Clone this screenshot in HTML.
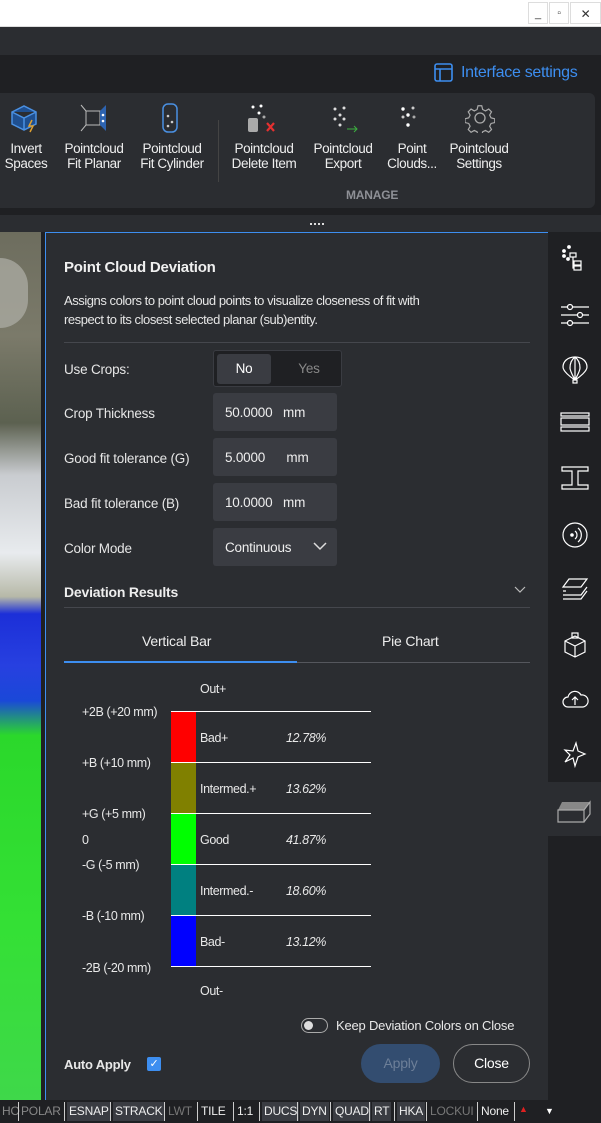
<!DOCTYPE html>
<html><head><meta charset="utf-8"><style>
*{margin:0;padding:0;box-sizing:border-box}
body{width:601px;height:1123px;overflow:hidden;background:#2b2d31;font-family:"Liberation Sans",sans-serif;color:#e8e8e8;position:relative;font-size:13.5px;letter-spacing:-0.2px}
.a{position:absolute}
.lbl{position:absolute;left:64px;font-size:13.5px;color:#e6e6e6}
.inp{position:absolute;left:213px;width:124px;height:38px;background:#3a3c42;border-radius:3px;font-size:13.5px;padding:12px 0 0 12px;color:#eee}
.tb{position:absolute;text-align:center;font-size:13.5px;line-height:15px;color:#eee;top:141px;letter-spacing:-0.4px}
.sb{position:absolute;top:1102px;height:19px;font-size:12px;line-height:19px;padding:0 2px;color:#eee}
.sep{position:absolute;top:1102px;width:1px;height:19px;background:#ccc}
.c{position:absolute;font-size:12.5px;letter-spacing:-0.4px}
</style></head><body>
<div class="a" style="left:0;top:0;width:601px;height:27px;background:#fff;border-bottom:1px solid #ddd"></div>
<div class="a" style="left:528px;top:2px;width:20px;height:22px;border:1px solid #ddd;font-size:11px;text-align:center;line-height:22px;color:#333">_</div>
<div class="a" style="left:549px;top:2px;width:20px;height:22px;border:1px solid #ddd;font-size:10px;text-align:center;line-height:22px;color:#333">▫</div>
<div class="a" style="left:570px;top:2px;width:31px;height:22px;border:1px solid #ddd;font-size:12px;text-align:center;line-height:22px;color:#333">✕</div>
<div class="a" style="left:0;top:27px;width:601px;height:28px;background:#2b2d31"></div>
<div class="a" style="left:0;top:55px;width:601px;height:160px;background:#1f2023"></div>
<svg class="a" style="left:433px;top:62px" width="22" height="22"><rect x="2" y="2" width="17" height="17" rx="2" fill="none" stroke="#3d8ef0" stroke-width="1.6"/><line x1="2" y1="7" x2="19" y2="7" stroke="#3d8ef0" stroke-width="1.6"/><line x1="7" y1="7" x2="7" y2="19" stroke="#3d8ef0" stroke-width="1.6"/></svg>
<div class="a" style="left:461px;top:64px;font-size:16px;color:#3d8ef0;letter-spacing:-0.3px">Interface settings</div>
<div class="a" style="left:0;top:93px;width:595px;height:115px;background:#2b2d31;border-radius:0 6px 6px 0"></div>
<svg class="a" style="left:8px;top:102px" width="32" height="32"><path d="M4 10 L16 4 L28 10 L28 22 L16 28 L4 22Z M4 10 L16 16 L28 10 M16 16 L16 28" fill="#1f4f8f" stroke="#4a90e2" stroke-width="1.5"/><path d="M24 18 l-3 6 h4 l-3 6" stroke="#e0a030" fill="none" stroke-width="1.5"/></svg>
<svg class="a" style="left:78px;top:102px" width="32" height="32"><rect x="8" y="9" width="14" height="14" fill="none" stroke="#bbb"/><path d="M3 3 L8 9 M3 29 L8 23" stroke="#bbb"/><path d="M22 9 L28 3 L28 29 L22 23Z" fill="#2d63b0"/><circle cx="25" cy="13" r="1.3" fill="#fff"/><circle cx="25" cy="19" r="1.3" fill="#fff"/></svg>
<svg class="a" style="left:158px;top:102px" width="24" height="32"><rect x="5" y="2" width="14" height="28" rx="5" fill="none" stroke="#4a90e2" stroke-width="1.5"/><circle cx="10" cy="14" r="1.3" fill="#ccc"/><circle cx="14" cy="20" r="1.3" fill="#ccc"/><circle cx="10" cy="24" r="1.3" fill="#ccc"/></svg>
<div class="a" style="left:218px;top:120px;width:1px;height:62px;background:#444"></div>
<svg class="a" style="left:245px;top:103px" width="36" height="32"><circle cx="8" cy="4" r="1.5" fill="#fff"/><circle cx="16" cy="3" r="1.5" fill="#fff"/><circle cx="14" cy="10" r="1.5" fill="#fff"/><circle cx="19" cy="14" r="1.5" fill="#aaa"/><rect x="3" y="15" width="10" height="14" rx="2" fill="#aaa"/><path d="M22 20 l7 8 M29 20 l-7 8" stroke="#e53030" stroke-width="2.2"/></svg>
<svg class="a" style="left:326px;top:103px" width="36" height="32"><circle cx="9" cy="6" r="1.5" fill="#ddd"/><circle cx="18" cy="5" r="1.5" fill="#ddd"/><circle cx="14" cy="12" r="1.5" fill="#ddd"/><circle cx="9" cy="16" r="1.5" fill="#ddd"/><circle cx="18" cy="16" r="1.5" fill="#ddd"/><circle cx="14" cy="22" r="1.5" fill="#ddd"/><path d="M21 26 h10 m-3 -3 l3 3 l-3 3" stroke="#3cb040" fill="none"/></svg>
<svg class="a" style="left:396px;top:103px" width="30" height="32"><circle cx="7" cy="6" r="1.7" fill="#fff"/><circle cx="17" cy="5" r="1.5" fill="#ccc"/><circle cx="12" cy="12" r="1.7" fill="#fff"/><circle cx="7" cy="14" r="1.5" fill="#ccc"/><circle cx="18" cy="14" r="1.5" fill="#aaa"/><circle cx="12" cy="22" r="1.7" fill="#fff"/></svg>
<svg class="a" style="left:465px;top:103px" width="30" height="30"><circle cx="15" cy="15" r="5" fill="none" stroke="#aaa" stroke-width="1.3"/><path d="M13 2h4l1 4 3 1.5 3.5-2 3 3-2 3.5 1.5 3 4 1v4l-4 1-1.5 3 2 3.5-3 3-3.5-2-3 1.5-1 4h-4l-1-4-3-1.5-3.5 2-3-3 2-3.5-1.5-3-4-1v-4l4-1 1.5-3-2-3.5 3-3 3.5 2 3-1.5z" fill="none" stroke="#aaa" stroke-width="1.3" transform="scale(0.93) translate(1 1)"/></svg>
<div class="tb" style="left:0;width:52px">Invert<br>Spaces</div>
<div class="tb" style="left:56px;width:76px">Pointcloud<br>Fit Planar</div>
<div class="tb" style="left:133px;width:78px">Pointcloud<br>Fit Cylinder</div>
<div class="tb" style="left:225px;width:78px">Pointcloud<br>Delete Item</div>
<div class="tb" style="left:304px;width:78px">Pointcloud<br>Export</div>
<div class="tb" style="left:380px;width:64px">Point<br>Clouds...</div>
<div class="tb" style="left:440px;width:78px">Pointcloud<br>Settings</div>
<div class="a" style="left:346px;top:188px;font-size:12px;font-weight:bold;color:#8e9096">MANAGE</div>
<div class="a" style="left:0;top:215px;width:601px;height:17px;background:#2b2d31"></div>
<div class="a" style="left:310px;top:223px;width:14px;height:2px;border-top:2px dotted #ddd"></div>
<div class="a" style="left:0;top:232px;width:41px;height:868px;background:linear-gradient(180deg,#6d6d5e 0%,#7b7a6a 12%,#5c6150 22%,#c9ccd0 28%,#e8ebee 37%,#b7b9a8 42%,#1c2fd8 44%,#2740e0 50%,#1a48d8 54%,#2bd82b 58%,#34e035 80%,#3fd84a 100%)"></div>
<div class="a" style="left:0;top:258px;width:28px;height:70px;background:#a9a9a0;border-radius:0 35px 35px 0;opacity:.8"></div>
<div class="a" style="left:41px;top:232px;width:4px;height:868px;background:#1f2023"></div>
<div class="a" style="left:45px;top:232px;width:503px;height:868px;background:#2b2d31;border-top:1px solid #3d8ef0;border-left:1px solid #3d8ef0"></div>
<div class="a" style="left:64px;top:259px;font-size:15px;font-weight:bold;color:#f0f0f0">Point Cloud Deviation</div>
<div class="a" style="left:64px;top:291px;width:480px;font-size:13px;line-height:19px;color:#e6e6e6;letter-spacing:-0.45px">Assigns colors to point cloud points to visualize closeness of fit with<br>respect to its closest selected planar (sub)entity.</div>
<div class="a" style="left:64px;top:342px;width:466px;height:1px;background:#45474d"></div>
<div class="lbl" style="top:362px">Use Crops:</div>
<div class="a" style="left:213px;top:350px;width:129px;height:37px;background:#1f2023;border:1px solid #3a3c42;border-radius:3px"></div>
<div class="a" style="left:217px;top:354px;width:54px;height:30px;background:#3a3c42;border-radius:3px;text-align:center;line-height:30px;color:#fff">No</div>
<div class="a" style="left:284px;top:354px;width:50px;height:30px;text-align:center;line-height:30px;color:#888">Yes</div>
<div class="lbl" style="top:406px">Crop Thickness</div>
<div class="inp" style="top:393px">50.0000&nbsp;&nbsp;&nbsp;mm</div>
<div class="lbl" style="top:451px">Good fit tolerance (G)</div>
<div class="inp" style="top:438px">5.0000&nbsp;&nbsp;&nbsp;&nbsp;&nbsp;&nbsp;mm</div>
<div class="lbl" style="top:496px">Bad fit tolerance (B)</div>
<div class="inp" style="top:483px">10.0000&nbsp;&nbsp;&nbsp;mm</div>
<div class="lbl" style="top:541px">Color Mode</div>
<div class="inp" style="top:528px">Continuous</div>
<svg class="a" style="left:313px;top:541px" width="14" height="10"><path d="M1 2 l6 6 6-6" stroke="#ddd" fill="none" stroke-width="1.5"/></svg>
<div class="a" style="left:64px;top:584px;font-size:14px;font-weight:bold;color:#eee">Deviation Results</div>
<svg class="a" style="left:514px;top:586px" width="12" height="8"><path d="M1 1 l5 5 5-5" stroke="#bbb" fill="none" stroke-width="1.2"/></svg>
<div class="a" style="left:64px;top:607px;width:466px;height:1px;background:#45474d"></div>
<div class="a" style="left:142px;top:633px;font-size:14px;color:#eee">Vertical Bar</div>
<div class="a" style="left:382px;top:633px;font-size:14px;color:#eee">Pie Chart</div>
<div class="a" style="left:64px;top:662px;width:466px;height:1px;background:#55575d"></div>
<div class="a" style="left:64px;top:661px;width:233px;height:2px;background:#3d8ef0"></div>
<div class="c" style="left:200px;top:682px">Out+</div>
<div class="c" style="left:200px;top:984px">Out-</div>
<div class="a" style="left:171px;top:712px;width:25px;height:51px;background:#ff0000"></div>
<div class="a" style="left:171px;top:763px;width:25px;height:51px;background:#808000"></div>
<div class="a" style="left:171px;top:814px;width:25px;height:51px;background:#00ff00"></div>
<div class="a" style="left:171px;top:865px;width:25px;height:51px;background:#008080"></div>
<div class="a" style="left:171px;top:916px;width:25px;height:51px;background:#0000ff"></div>
<div class="a" style="left:171px;top:711px;width:200px;height:1px;background:#fff"></div>
<div class="a" style="left:171px;top:762px;width:200px;height:1px;background:#fff"></div>
<div class="a" style="left:171px;top:813px;width:200px;height:1px;background:#fff"></div>
<div class="a" style="left:171px;top:864px;width:200px;height:1px;background:#fff"></div>
<div class="a" style="left:171px;top:915px;width:200px;height:1px;background:#fff"></div>
<div class="a" style="left:171px;top:966px;width:200px;height:1px;background:#fff"></div>
<div class="c" style="left:82px;top:705px">+2B (+20 mm)</div>
<div class="c" style="left:82px;top:756px">+B (+10 mm)</div>
<div class="c" style="left:82px;top:807px">+G (+5 mm)</div>
<div class="c" style="left:82px;top:833px">0</div>
<div class="c" style="left:82px;top:858px">-G (-5 mm)</div>
<div class="c" style="left:82px;top:909px">-B (-10 mm)</div>
<div class="c" style="left:82px;top:961px">-2B (-20 mm)</div>
<div class="c" style="left:200px;top:731px">Bad+</div>
<div class="c" style="left:200px;top:782px">Intermed.+</div>
<div class="c" style="left:200px;top:833px">Good</div>
<div class="c" style="left:200px;top:884px">Intermed.-</div>
<div class="c" style="left:200px;top:935px">Bad-</div>
<div class="c" style="left:286px;top:731px;font-style:italic">12.78%</div>
<div class="c" style="left:286px;top:782px;font-style:italic">13.62%</div>
<div class="c" style="left:286px;top:833px;font-style:italic">41.87%</div>
<div class="c" style="left:286px;top:884px;font-style:italic">18.60%</div>
<div class="c" style="left:286px;top:935px;font-style:italic">13.12%</div>
<div class="a" style="left:301px;top:1018px;width:27px;height:15px;border:1px solid #aaa;border-radius:8px"></div>
<div class="a" style="left:304px;top:1021px;width:9px;height:9px;background:#ddd;border-radius:50%"></div>
<div class="a" style="left:336px;top:1018px;font-size:13px">Keep Deviation Colors on Close</div>
<div class="a" style="left:64px;top:1057px;font-size:13px;font-weight:bold">Auto Apply</div>
<div class="a" style="left:147px;top:1057px;width:14px;height:14px;background:#3d8ef0;border-radius:2px;color:#fff;font-size:11px;text-align:center;line-height:14px">✓</div>
<div class="a" style="left:361px;top:1044px;width:79px;height:39px;background:#334d70;border-radius:20px;text-align:center;line-height:39px;color:#6d7f98;font-size:14px">Apply</div>
<div class="a" style="left:453px;top:1044px;width:77px;height:39px;border:1px solid #888;border-radius:20px;text-align:center;line-height:37px;color:#fff;font-size:14px">Close</div>
<div class="a" style="left:548px;top:232px;width:53px;height:868px;background:#1f2023"></div>
<div class="a" style="left:548px;top:782px;width:53px;height:54px;background:#2b2d31"></div>
<svg class="a" style="left:560px;top:245px" width="30" height="30" fill="none" stroke="#fff" stroke-width="1.2"><circle cx="4" cy="6" r="1.3" fill="#fff"/><circle cx="9" cy="2" r="1.3" fill="#fff"/><circle cx="4" cy="11" r="1.3" fill="#fff"/><circle cx="8" cy="14" r="1.3" fill="#fff"/><rect x="10" y="8" width="6" height="4"/><rect x="14" y="16" width="7" height="4"/><rect x="14" y="21" width="7" height="4"/><path d="M13 12v11h1M13 18h1"/></svg>
<svg class="a" style="left:560px;top:302px" width="30" height="30" stroke="#fff" fill="none" stroke-width="1.2"><path d="M1 5h28M1 13h28M1 21h28"/><circle cx="10" cy="5" r="2.5" fill="#1f2023"/><circle cx="20" cy="13" r="2.5" fill="#1f2023"/><circle cx="10" cy="21" r="2.5" fill="#1f2023"/></svg>
<svg class="a" style="left:560px;top:355px" width="30" height="30" stroke="#fff" fill="none" stroke-width="1.2"><path d="M15 2c-8 0-12 5-12 10 0 4 7 10 12 13 5-3 12-9 12-13 0-5-4-10-12-10z M15 2c-4 3-5 8-5 11s3 8 5 12 M15 2c4 3 5 8 5 11s-3 8-5 12M15 2v23"/><rect x="13" y="25" width="4" height="3"/></svg>
<svg class="a" style="left:560px;top:410px" width="30" height="30" stroke="#fff" fill="none" stroke-width="1.2"><rect x="1" y="3" width="28" height="3"/><rect x="1" y="8" width="28" height="7"/><rect x="1" y="17" width="28" height="4"/></svg>
<svg class="a" style="left:560px;top:465px" width="30" height="30" stroke="#fff" fill="none" stroke-width="1.2"><path d="M2 2h26v4H18v14h10v4H2v-4h10V6H2z"/></svg>
<svg class="a" style="left:560px;top:520px" width="30" height="30" stroke="#fff" fill="none" stroke-width="1.2"><circle cx="15" cy="15" r="12"/><circle cx="12" cy="15" r="1.2" fill="#fff"/><path d="M15 11a5 5 0 0 1 0 8M18 8a9 9 0 0 1 0 14"/></svg>
<svg class="a" style="left:560px;top:575px" width="30" height="30" stroke="#fff" fill="none" stroke-width="1.2"><path d="M9 4h18l-6 8H3z M3 16l3 0 M27 12l-6 8H3 M27 16l-6 8H3"/></svg>
<svg class="a" style="left:560px;top:630px" width="30" height="30" stroke="#fff" fill="none" stroke-width="1.2"><path d="M15 6l10 5v11l-10 5-10-5V11z M5 11l10 5 10-5 M15 16v11"/><rect x="12" y="3" width="6" height="5"/></svg>
<svg class="a" style="left:560px;top:685px" width="30" height="30" stroke="#fff" fill="none" stroke-width="1.2"><path d="M8 22a5 5 0 0 1 0-10 7 7 0 0 1 13-2 6 6 0 0 1 2 12z M15 20v-8m-3 3l3-3 3 3"/></svg>
<svg class="a" style="left:560px;top:740px" width="30" height="30" stroke="#fff" fill="none" stroke-width="1.2"><path d="M16 3l2 8 7 3-7 3-3 9-2-8-8 4 5-7-5-5 8 1z"/></svg>
<svg class="a" style="left:556px;top:792px" width="36" height="34"><path d="M6 10h28l-6 8H2z" fill="#888"/><path d="M2 18h26v12H2z M28 18l6-8v12l-6 8" fill="none" stroke="#aaa" stroke-width="1.2"/></svg>
<div class="a" style="left:0;top:1100px;width:601px;height:23px;background:#1f2023"></div>
<div class="sb" style="left:0;color:#888">HO</div><div class="sep" style="left:18px"></div>
<div class="sb" style="left:19px;color:#888">POLAR</div><div class="sep" style="left:64px"></div>
<div class="sb" style="left:67px;background:#3a3c42">ESNAP</div><div class="sep" style="left:110px"></div>
<div class="sb" style="left:113px;background:#3a3c42">STRACK</div><div class="sep" style="left:164px"></div>
<div class="sb" style="left:166px;color:#777">LWT</div><div class="sep" style="left:197px"></div>
<div class="sb" style="left:199px">TILE</div><div class="sep" style="left:233px"></div>
<div class="sb" style="left:235px">1:1</div><div class="sep" style="left:259px"></div>
<div class="sb" style="left:262px;background:#3a3c42">DUCS</div><div class="sep" style="left:297px"></div>
<div class="sb" style="left:300px;background:#3a3c42">DYN</div><div class="sep" style="left:330px"></div>
<div class="sb" style="left:333px;background:#3a3c42">QUAD</div><div class="sep" style="left:369px"></div>
<div class="sb" style="left:372px;background:#3a3c42">RT</div><div class="sep" style="left:394px"></div>
<div class="sb" style="left:397px;background:#3a3c42">HKA</div><div class="sep" style="left:426px"></div>
<div class="sb" style="left:428px;color:#777">LOCKUI</div><div class="sep" style="left:477px"></div>
<div class="sb" style="left:479px">None</div><div class="sep" style="left:514px"></div>
<div class="a" style="left:519px;top:1104px;font-size:9px;color:#e02020">▲</div>
<div class="a" style="left:545px;top:1106px;font-size:9px;color:#fff">▼</div>
</body></html>
